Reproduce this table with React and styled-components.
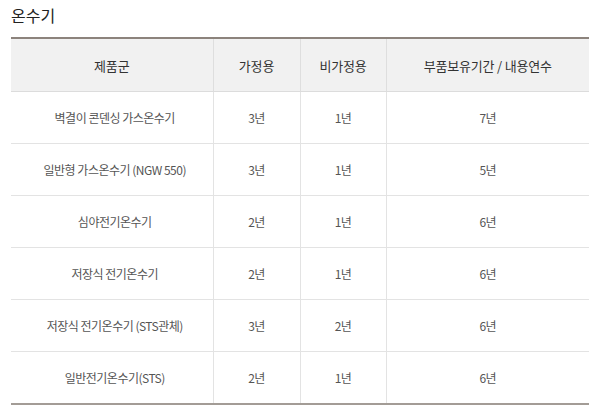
import React from "react";
import styled, { createGlobalStyle } from "styled-components";

const Global = createGlobalStyle`
  html, body { margin: 0; padding: 0; background: #fff; }
  body { font-family: "Noto Sans CJK KR", "Noto Sans", sans-serif; }
`;

const Page = styled.div`
  padding: 4px 16px 0 11px;
  width: 605px;
  box-sizing: border-box;
`;

const Title = styled.h2`
  margin: 0 0 11px 0;
  font-size: 16px;
  line-height: 22px;
  font-weight: 400;
  color: #222;
`;

const Table = styled.table`
  width: 578px;
  border-collapse: collapse;
  table-layout: fixed;
  border-top: 2px solid #8c837c;
  border-bottom: 2px solid #a39c96;
`;

const Th = styled.th`
  height: 52px;
  padding: 0;
  background: #f1f1f1;
  color: #333;
  font-size: 13px;
  font-weight: 400;
  letter-spacing: -0.2px;
  text-align: center;
  border-left: 1px solid #dedede;
  border-bottom: 1px solid #dcdcdc;
  &:first-child { border-left: none; }
`;

const Td = styled.td`
  height: 51px;
  padding: 0;
  color: #555;
  font-size: 12px;
  letter-spacing: -0.5px;
  text-align: center;
  border-left: 1px solid #e3e3e3;
  border-top: 1px solid #e3e3e3;
  &:first-child { border-left: none; padding-left: 6px; }
`;

const rows = [
  ["벽결이 콘덴싱 가스온수기", "3년", "1년", "7년"],
  ["일반형 가스온수기 (NGW 550)", "3년", "1년", "5년"],
  ["심야전기온수기", "2년", "1년", "6년"],
  ["저장식 전기온수기", "2년", "1년", "6년"],
  ["저장식 전기온수기 (STS관체)", "3년", "2년", "6년"],
  ["일반전기온수기(STS)", "2년", "1년", "6년"],
];

export default function App() {
  return (
    <Page>
      <Global />
      <Title>온수기</Title>
      <Table>
        <colgroup>
          <col style={{ width: 202 }} />
          <col style={{ width: 87 }} />
          <col style={{ width: 86 }} />
          <col style={{ width: 203 }} />
        </colgroup>
        <thead>
          <tr>
            <Th>제품군</Th>
            <Th>가정용</Th>
            <Th>비가정용</Th>
            <Th>부품보유기간 / 내용연수</Th>
          </tr>
        </thead>
        <tbody>
          {rows.map((r, i) => (
            <tr key={i}>
              {r.map((c, j) => (
                <Td key={j}>{c}</Td>
              ))}
            </tr>
          ))}
        </tbody>
      </Table>
    </Page>
  );
}
